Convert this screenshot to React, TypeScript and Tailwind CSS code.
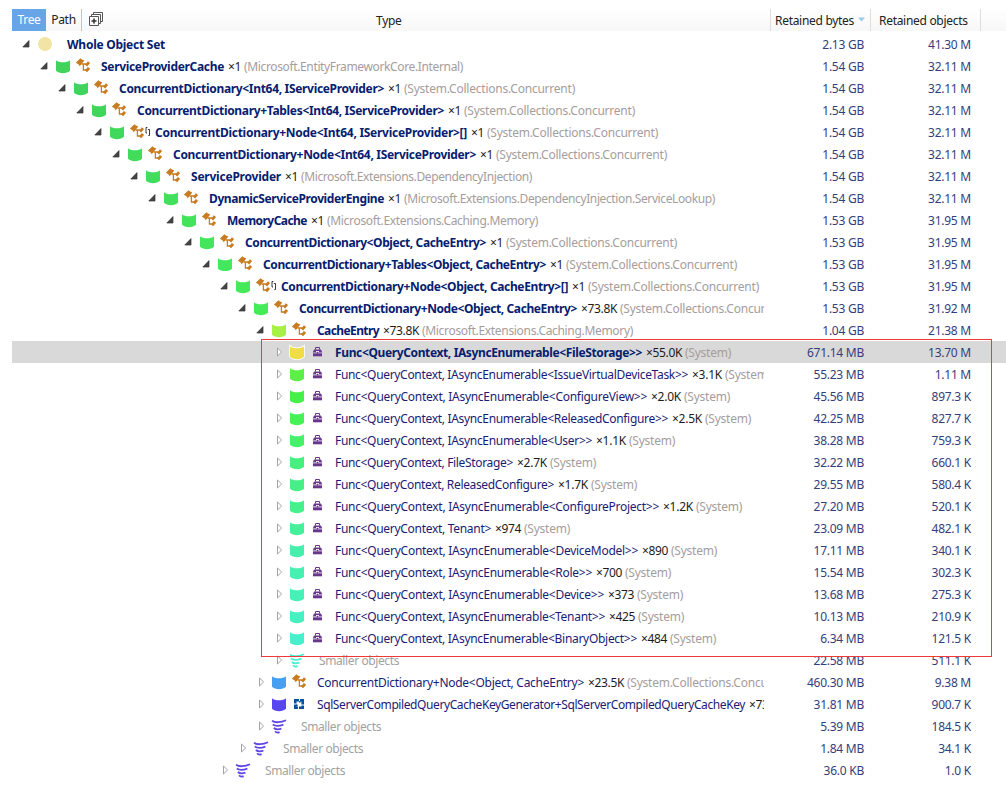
import { useLayoutEffect, useRef, useState } from 'react';

type Kind = 'set' | 'class' | 'array' | 'delegate' | 'struct' | 'small';
type Row = {
  depth: number;
  kind: Kind;
  color: string;
  name: string;
  nameWidth: number;
  count?: string;
  ns?: string;
  bytes: string;
  objects: string;
  bold?: boolean;
  open?: boolean;
  selected?: boolean;
};

const COLL = '(System.Collections.Concurrent)';
const nsWidths: Record<string, number> = {
  '(System)': 46,
  [COLL]: 171,
  '(Microsoft.EntityFrameworkCore.Internal)': 219,
  '(Microsoft.Extensions.DependencyInjection)': 231,
  '(Microsoft.Extensions.DependencyInjection.ServiceLookup)': 311,
  '(Microsoft.Extensions.Caching.Memory)': 211,
};

const fn = (color: string, arg: string, nameWidth: number, count: string, bytes: string, objects: string, selected = false): Row => ({
  depth: 14, kind: 'delegate', color, name: `Func<QueryContext, ${arg}>`, nameWidth, count, ns: '(System)', bytes, objects, selected, bold: selected,
});
const open = (depth: number, color: string, name: string, nameWidth: number, count: string, ns: string, bytes: string, objects: string, kind: Kind = 'class'): Row => ({
  depth, kind, color, name, nameWidth, count, ns, bytes, objects, bold: true, open: true,
});

const rows: Row[] = [
  { depth: 0, kind: 'set', color: '#f1e4a5', name: 'Whole Object Set', nameWidth: 98, bytes: '2.13 GB', objects: '41.30 M', bold: true, open: true },
  open(1, '#40d45c', 'ServiceProviderCache', 123, '×1', '(Microsoft.EntityFrameworkCore.Internal)', '1.54 GB', '32.11 M'),
  open(2, '#40d45c', 'ConcurrentDictionary<Int64, IServiceProvider>', 265, '×1', COLL, '1.54 GB', '32.11 M'),
  open(3, '#40d65c', 'ConcurrentDictionary+Tables<Int64, IServiceProvider>', 307, '×1', COLL, '1.54 GB', '32.11 M'),
  open(4, '#41d95b', 'ConcurrentDictionary+Node<Int64, IServiceProvider>[]', 312, '×1', COLL, '1.54 GB', '32.11 M', 'array'),
  open(5, '#41dc5b', 'ConcurrentDictionary+Node<Int64, IServiceProvider>', 303, '×1', COLL, '1.54 GB', '32.11 M'),
  open(6, '#42de5b', 'ServiceProvider', 90, '×1', '(Microsoft.Extensions.DependencyInjection)', '1.54 GB', '32.11 M'),
  open(7, '#42e05b', 'DynamicServiceProviderEngine', 175, '×1', '(Microsoft.Extensions.DependencyInjection.ServiceLookup)', '1.54 GB', '32.11 M'),
  open(8, '#43e35b', 'MemoryCache', 80, '×1', '(Microsoft.Extensions.Caching.Memory)', '1.53 GB', '31.95 M'),
  open(9, '#43e55b', 'ConcurrentDictionary<Object, CacheEntry>', 241, '×1', COLL, '1.53 GB', '31.95 M'),
  open(10, '#43e85b', 'ConcurrentDictionary+Tables<Object, CacheEntry>', 283, '×1', COLL, '1.53 GB', '31.95 M'),
  open(11, '#44ea5a', 'ConcurrentDictionary+Node<Object, CacheEntry>[]', 287, '×1', COLL, '1.53 GB', '31.95 M', 'array'),
  open(12, '#44ec58', 'ConcurrentDictionary+Node<Object, CacheEntry>', 278, '×73.8K', COLL, '1.53 GB', '31.92 M'),
  open(13, '#a7f044', 'CacheEntry', 62, '×73.8K', '(Microsoft.Extensions.Caching.Memory)', '1.04 GB', '21.38 M'),
  fn('#f0dc46', 'IAsyncEnumerable<FileStorage>', 307, '×55.0K', '671.14 MB', '13.70 M', true),
  fn('#5cf046', 'IAsyncEnumerable<IssueVirtualDeviceTask>', 353, '×3.1K', '55.23 MB', '1.11 M'),
  fn('#46f04b', 'IAsyncEnumerable<ConfigureView>', 312, '×2.0K', '45.56 MB', '897.3 K'),
  fn('#46f057', 'IAsyncEnumerable<ReleasedConfigure>', 333, '×2.5K', '42.25 MB', '827.7 K'),
  fn('#46f067', 'IAsyncEnumerable<User>', 257, '×1.1K', '38.28 MB', '759.3 K'),
  fn('#46f07c', 'FileStorage', 178, '×2.7K', '32.22 MB', '660.1 K'),
  fn('#46f086', 'ReleasedConfigure', 219, '×1.7K', '29.55 MB', '580.4 K'),
  fn('#46f08d', 'IAsyncEnumerable<ConfigureProject>', 324, '×1.2K', '27.20 MB', '520.1 K'),
  fn('#46f09b', 'Tenant', 156, '×974', '23.09 MB', '482.1 K'),
  fn('#46f0ac', 'IAsyncEnumerable<DeviceModel>', 303, '×890', '17.11 MB', '340.1 K'),
  fn('#46f0b1', 'IAsyncEnumerable<Role>', 257, '×700', '15.54 MB', '302.3 K'),
  fn('#46f0b6', 'IAsyncEnumerable<Device>', 269, '×373', '13.68 MB', '275.3 K'),
  fn('#46f0c0', 'IAsyncEnumerable<Tenant>', 270, '×425', '10.13 MB', '210.9 K'),
  fn('#46f0ca', 'IAsyncEnumerable<BinaryObject>', 302, '×484', '6.34 MB', '121.5 K'),
  { depth: 14, kind: 'small', color: '#46f0d0', name: 'Smaller objects', nameWidth: 80, bytes: '22.58 MB', objects: '511.1 K' },
  { depth: 13, kind: 'class', color: '#469ff0', name: 'ConcurrentDictionary+Node<Object, CacheEntry>', nameWidth: 267, count: '×23.5K', ns: COLL, bytes: '460.30 MB', objects: '9.38 M' },
  { depth: 13, kind: 'struct', color: '#5846f0', name: 'SqlServerCompiledQueryCacheKeyGenerator+SqlServerCompiledQueryCacheKey', nameWidth: 428, count: '×73.8K', bytes: '31.81 MB', objects: '900.7 K' },
  { depth: 13, kind: 'small', color: '#5f46e6', name: 'Smaller objects', nameWidth: 80, bytes: '5.39 MB', objects: '184.5 K' },
  { depth: 12, kind: 'small', color: '#5f46e6', name: 'Smaller objects', nameWidth: 80, bytes: '1.84 MB', objects: '34.1 K' },
  { depth: 11, kind: 'small', color: '#5f46e6', name: 'Smaller objects', nameWidth: 80, bytes: '36.0 KB', objects: '1.0 K' },
];

/** Spreads its text over a given width by adjusting the letter spacing. */
function Fit({ text, width, className }: { text: string; width: number; className: string }) {
  const ref = useRef<HTMLSpanElement>(null);
  const [spacing, setSpacing] = useState(0);
  useLayoutEffect(() => {
    const natural = ref.current?.getBoundingClientRect().width ?? width;
    setSpacing((width - natural) / text.length);
  }, [text, width]);
  return (
    <span ref={ref} className={`inline-block ${className}`} style={{ letterSpacing: spacing }}>
      {text}
    </span>
  );
}

function Arrow({ open }: { open?: boolean }) {
  return open ? (
    <svg className="mr-[7px] ml-px h-4 w-2 shrink-0" viewBox="0 0 8 16">
      <path d="M7 4.6v6.4H.8z" fill="#444" stroke="#333" strokeWidth=".7" />
    </svg>
  ) : (
    <svg className="ml-[3px] mr-[5px] h-4 w-2 shrink-0" viewBox="0 0 8 16">
      <path d="M1.5 4v8L5.6 8z" fill="#fff" stroke="#a4a4a4" />
    </svg>
  );
}

function Marker({ kind, color, selected }: { kind: Kind; color: string; selected?: boolean }) {
  return (
    <svg className="h-4 w-4 shrink-0" viewBox="-1 0 16 16">
      {kind === 'set' ? (
        <circle cx="7" cy="8" r="7" fill={color} />
      ) : kind === 'small' ? (
        <g fill="none" stroke={color} strokeWidth="1.8">
          <path d="M0 2.8C3 5 9 4.6 14 2.2" />
          <path d="M.8 6.5C3.5 8.4 7 8.2 11.4 6.6" />
          <path d="M1.8 10C4 11.8 6.5 11.6 9.4 10.6" />
          <path d="M3 13.4C4.5 14.8 6 14.8 7.6 14.1" />
        </g>
      ) : (
        <path
          d="M0 2.2C3 5 11 5 14 2.2V12.8C11 15.9 3 15.9 0 12.8Z"
          fill={color}
          stroke={selected ? '#fff' : 'none'}
          strokeWidth="1.6"
          paintOrder="stroke"
        />
      )}
    </svg>
  );
}

function TypeIcon({ kind }: { kind: Kind }) {
  if (kind === 'delegate')
    return (
      <svg className="h-4 w-[14px] shrink-0" viewBox="0 0 14 16">
        <path d="M5.5 5.5v-2h4v2" fill="none" stroke="#68368c" />
        <path d="M4 5.4h7l1.3 3H2.7z" fill="#68368c" />
        <path d="M3 9.3h9v3H3z" fill="#68368c" />
        <path d="M6 7h3v1.4H6z" fill="#fff" />
        <path d="M6.8 7.7h1.4v1.6H6.8z" fill="#68368c" />
      </svg>
    );
  if (kind === 'struct')
    return (
      <svg className="h-4 w-[14px] shrink-0" viewBox="0 0 14 16" fill="#00539c">
        <path d="M2 3h5v2.4H4.6v2.2H2z" />
        <path d="M8 3h4v5.5H9.4V5.6H8z" />
        <path d="M2 8.6h2.6v2H6V13H2z" />
        <path d="M7 10.6h2.4V9.5H12V13H7z" />
        <path d="M7 5h1.6v1.6H7zM4 8.6h1.6v1.6H4z" />
      </svg>
    );
  return (
    <svg className="h-4 w-[14px] shrink-0" viewBox="0 0 14 16">
      <path d="M-.1 4.7 4.4.3 6 1.6 8.3 2.6 3.8 8.2 2.4 6.3z" fill="#c97b20" />
      <path d="M5.5 6H10M7.4 6v6h3" fill="none" stroke="#c97b20" strokeWidth="1.3" />
      <path d="M9 6.7 11.9 3.2 14.1 5.1 11.1 8.6zM9 12.3 11.9 8.9 14.1 10.8 11.1 14.3z" fill="#c97b20" />
    </svg>
  );
}

function TreeRow({ row }: { row: Row }) {
  const small = row.kind === 'small';
  const iconic = !small && row.kind !== 'set';
  return (
    <div className={`flex h-[22px] items-center ${row.selected ? 'bg-[#d9d9d9]' : ''}`}>
      <div className="flex w-[752px] shrink-0 items-center overflow-hidden" style={{ paddingLeft: 9 + row.depth * 18 }}>
        <Arrow open={row.open} />
        <Marker kind={row.kind} color={row.color} selected={row.selected} />
        <div className={`flex shrink-0 items-center ${iconic ? 'ml-[5px] w-[25px]' : 'w-[14px]'}`}>
          {iconic && <TypeIcon kind={row.kind} />}
          {row.kind === 'array' && (
            <svg className="ml-px h-4 w-[6px]" viewBox="0 0 6 16" fill="none" stroke="#222" strokeWidth=".9">
              <path d="M2.4 3.5H1v5.5h1M2.9 5.5h1.6v6H3.4" />
            </svg>
          )}
        </div>
        <div className="flex whitespace-pre pt-px">
          <Fit text={row.name} width={row.nameWidth} className={small ? 'text-[#a2a2a2]' : row.bold ? 'font-bold text-[#06206f]' : 'text-[#1b1b74]'} />
          {row.count && (
            <Fit text={row.count} width={[0, 0, 13, 0, 26, 30, 36][row.count.length]} className="ml-1 text-[#1c1c1c]" />
          )}
          {row.ns && <Fit text={row.ns} width={nsWidths[row.ns]} className="ml-[3px] text-[#a59d9d]" />}
        </div>
      </div>
      <div className="w-[100px] shrink-0 pt-px text-right tracking-[-0.25px] text-[#343e7c]">{row.bytes}</div>
      <div className="w-[107px] shrink-0 pt-px text-right tracking-[-0.25px] text-[#343e7c]">{row.objects}</div>
    </div>
  );
}

export default function App() {
  return (
    <div className="relative h-[787px] w-[1006px] overflow-hidden bg-white pl-3 pt-[9px] font-['Noto_Sans','Open_Sans',sans-serif] text-[12px] leading-[21px]">
      <div className="mb-[2px] flex h-[22px] bg-gradient-to-b from-white to-[#f7f7f7] tracking-[-0.3px] text-[#222]">
        <div className="w-[34px] bg-[#68a5e8] text-center text-white">Tree</div>
        <div className="w-9 border-r border-[#abc9e9] text-center">Path</div>
        <svg className="ml-1.5 mt-0.5 h-4 w-4 shrink-0" viewBox="0 0 16 16" fill="none" stroke="#555">
          <path d="M1.5 5.5h9v9h-9zM3.5 5.5v-2h9v9h-2M5.5 3.5v-2h9v9h-2" />
          <path d="M3.5 10h5M6 7.5v5" stroke="#333" strokeWidth="1.6" />
        </svg>
        <div className="w-[667px] border-r border-[#dedede] pl-[272px] pt-px">Type</div>
        <div className="flex w-[100px] border-r border-[#dedede] pl-1 pt-px">
          Retained bytes
          <svg className="ml-auto mr-[5px] mt-[6px] h-2 w-[7px]" viewBox="0 0 7 8"><path d="M0 1.5h7L3.5 5.5z" fill="#9bcce6" /></svg>
        </div>
        <div className="w-[110px] border-r border-[#dedede] pl-2 pt-px">Retained objects</div>
      </div>
      {rows.map((row, i) => <TreeRow key={i} row={row} />)}
      <div className="pointer-events-none absolute left-[261px] top-[339px] h-[318px] w-[731px] border border-[#f03a3a]" />
    </div>
  );
}
